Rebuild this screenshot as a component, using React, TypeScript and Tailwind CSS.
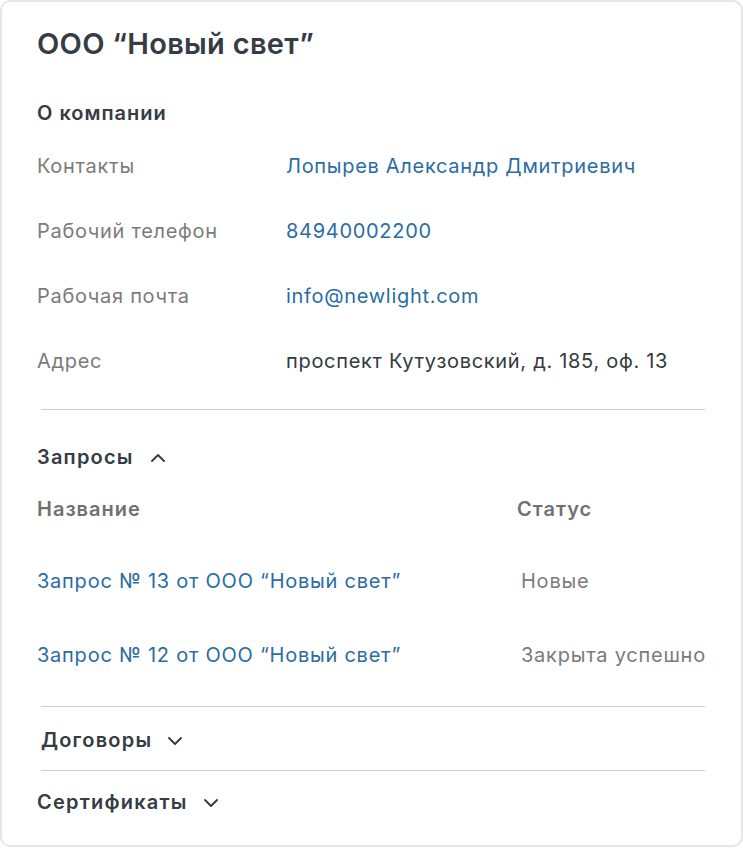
import { ChevronDown, ChevronUp } from 'lucide-react';

const font = { fontFamily: 'Inter, "Noto Sans", sans-serif' };

const details = [
  { label: 'Контакты', value: 'Лопырев Александр Дмитриевич', link: true },
  { label: 'Рабочий телефон', value: '84940002200', link: true },
  { label: 'Рабочая почта', value: 'info@newlight.com', link: true },
  { label: 'Адрес', value: 'проспект Кутузовский, д. 185, оф. 13', link: false },
];

const requests = [
  { title: 'Запрос № 13 от ООО “Новый свет”', status: 'Новые' },
  { title: 'Запрос № 12 от ООО “Новый свет”', status: 'Закрыта успешно' },
];

export default function App() {
  return (
    <div className="bg-white" style={font}>
      <div className="box-border h-[847px] w-[743px] rounded-[10px] border-2 border-[#e6e6e6] bg-white pl-[35px] pr-[20px] pt-[25px]">
        <h1 className="flex h-[34px] items-center text-[29px] font-semibold tracking-[0.01em] text-[#353c43]">ООО “Новый свет”</h1>

        <h2 className="mt-[38px] flex h-[28px] items-center text-[20px] font-semibold tracking-[0.05em] text-[#353c43]">О компании</h2>

        <div className="mt-[6px]">
          {details.map((row) => (
            <div key={row.label} className="flex h-[65px] items-center whitespace-nowrap text-[20px] tracking-[0.035em]">
              <span className="w-[249px] shrink-0 text-[#7b7b7b]">{row.label}</span>
              <span className={row.link ? 'text-[#2b6ca3]' : 'text-[#333a40]'}>{row.value}</span>
            </div>
          ))}
        </div>

        <div className="ml-1 mr-[16px] mt-[16px] h-px bg-[#cccccc]" />

        <button type="button" className="mt-[33px] flex h-[28px] items-center gap-[12px] text-[20px] font-semibold tracking-[0.06em] text-[#353c43]">
          Запросы
          <ChevronUp size={24} strokeWidth={1.9} className="mt-[1px]" />
        </button>

        <div className="mt-[24px] flex h-[28px] items-center text-[20px] font-semibold tracking-[0.05em] text-[#717171]">
          <span className="w-[480px] shrink-0">Название</span>
          <span>Статус</span>
        </div>

        <div className="mt-[21px]">
          {requests.map((row) => (
            <div key={row.title} className="flex h-[74px] items-center whitespace-nowrap text-[20px] tracking-[0.038em]">
              <a href="#" className="w-[484px] shrink-0 text-[#2b6ca3]">{row.title}</a>
              <span className="text-[#7b7b7b]">{row.status}</span>
            </div>
          ))}
        </div>

        <div className="ml-1 mr-[16px] mt-[14px] h-px bg-[#cccccc]" />

        <button type="button" className="ml-1 mt-[19px] flex h-[28px] items-center gap-[11px] text-[20px] font-semibold tracking-[0.06em] text-[#353c43]">
          Договоры
          <ChevronDown size={24} strokeWidth={1.9} className="mt-[2px]" />
        </button>

        <div className="ml-1 mr-[16px] mt-[16px] h-px bg-[#cccccc]" />

        <button type="button" className="mt-[17px] flex h-[28px] items-center gap-[11px] text-[20px] font-semibold tracking-[0.06em] text-[#353c43]">
          Сертификаты
          <ChevronDown size={24} strokeWidth={1.9} className="mt-[2px]" />
        </button>
      </div>
    </div>
  );
}
